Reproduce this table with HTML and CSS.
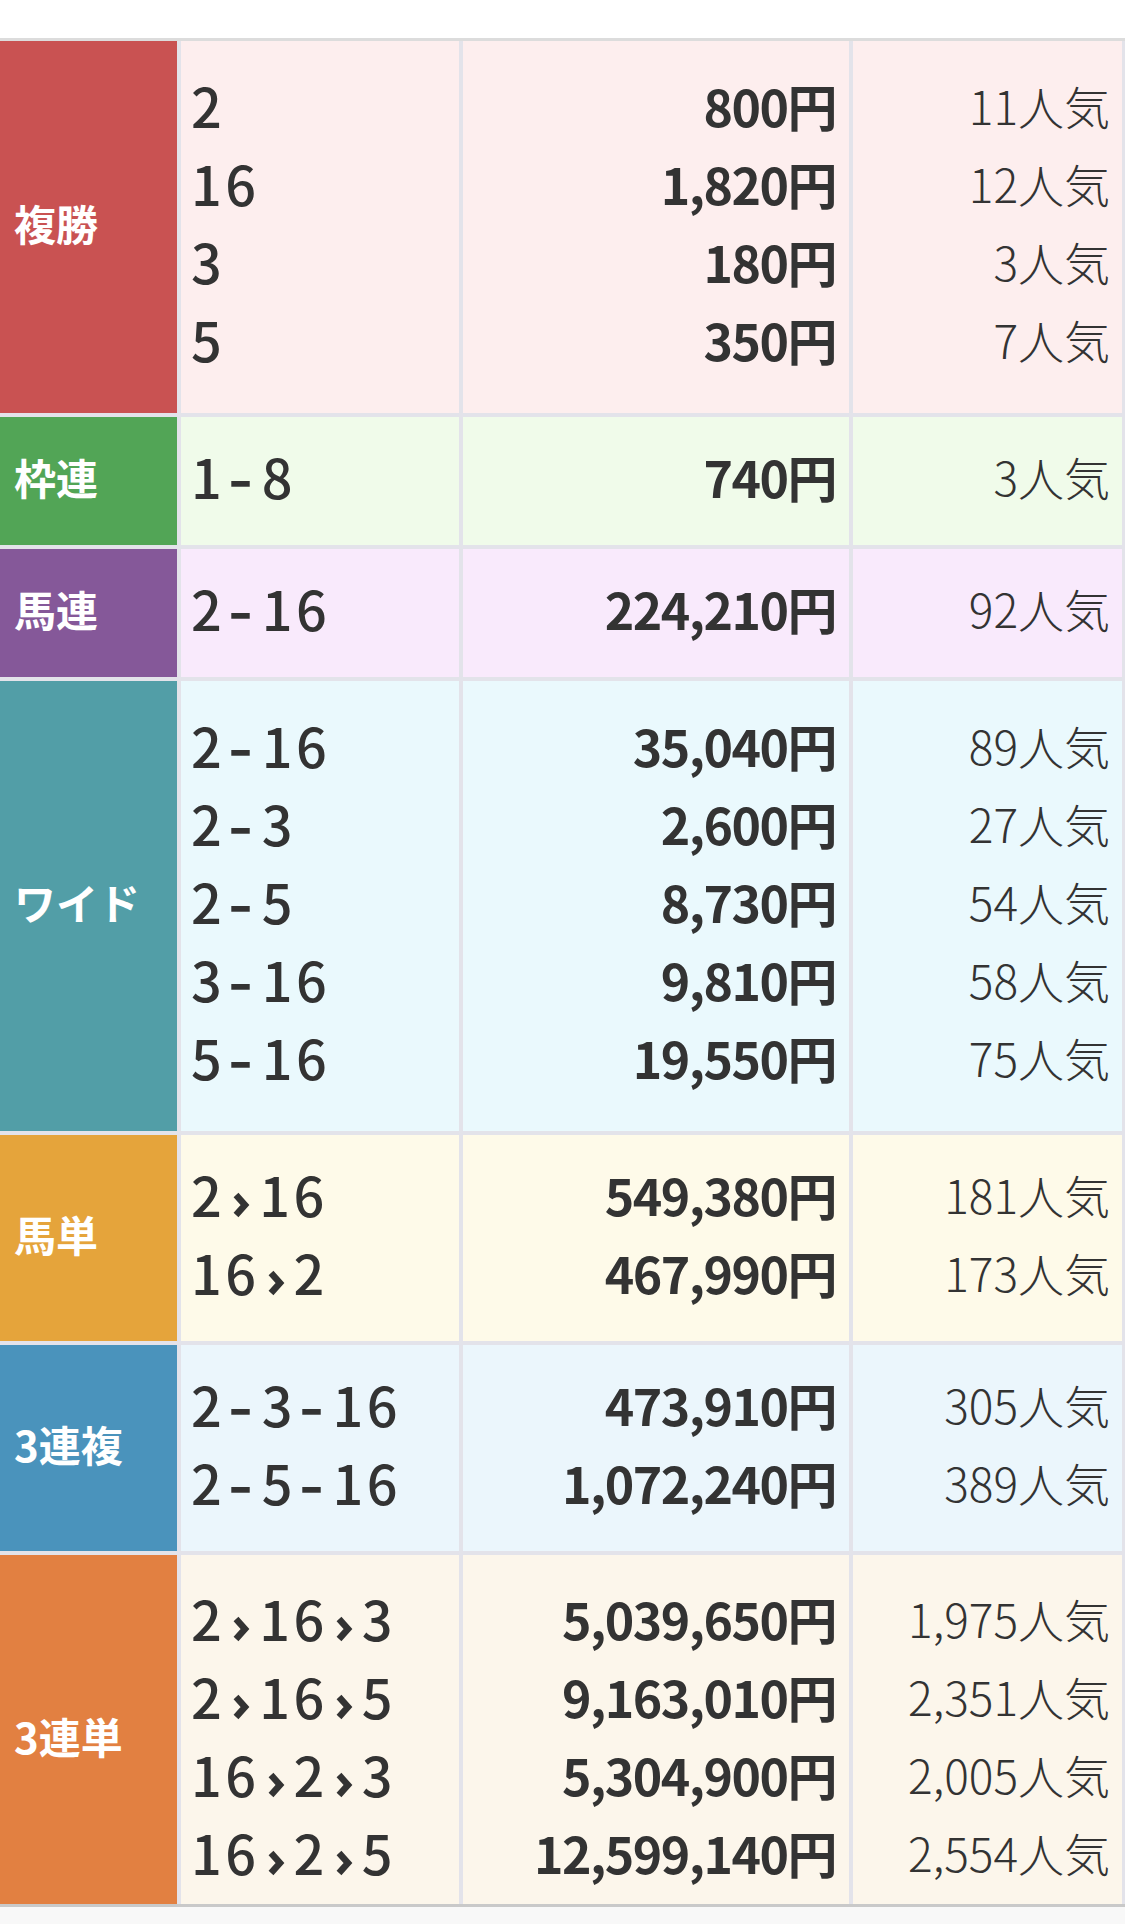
FILE: index.html
```html
<!DOCTYPE html>
<html lang="ja">
<head>
    <meta charset="UTF-8">
    <meta name="viewport" content="width=device-width, initial-scale=1.0">
    <title>払戻金</title>
    <link rel="stylesheet" href="styles.css">
</head>
<body>
    <div class="topbar"></div>

    <div class="payouts">
        <div class="bet fukusho multi">
            <div class="type">複勝</div>
            <div class="cell combo"><p>2</p><p>16</p><p>3</p><p>5</p></div>
            <div class="cell pay"><p>800円</p><p>1,820円</p><p>180円</p><p>350円</p></div>
            <div class="cell pop"><p>11人気</p><p>12人気</p><p>3人気</p><p>7人気</p></div>
        </div>

        <div class="bet wakuren">
            <div class="type">枠連</div>
            <div class="cell combo"><p>1<span class="sep">-</span>8</p></div>
            <div class="cell pay"><p>740円</p></div>
            <div class="cell pop"><p>3人気</p></div>
        </div>

        <div class="bet umaren">
            <div class="type">馬連</div>
            <div class="cell combo"><p>2<span class="sep">-</span>16</p></div>
            <div class="cell pay"><p>224,210円</p></div>
            <div class="cell pop"><p>92人気</p></div>
        </div>

        <div class="bet wide multi">
            <div class="type">ワイド</div>
            <div class="cell combo">
                <p>2<span class="sep">-</span>16</p>
                <p>2<span class="sep">-</span>3</p>
                <p>2<span class="sep">-</span>5</p>
                <p>3<span class="sep">-</span>16</p>
                <p>5<span class="sep">-</span>16</p>
            </div>
            <div class="cell pay"><p>35,040円</p><p>2,600円</p><p>8,730円</p><p>9,810円</p><p>19,550円</p></div>
            <div class="cell pop"><p>89人気</p><p>27人気</p><p>54人気</p><p>58人気</p><p>75人気</p></div>
        </div>

        <div class="bet umatan">
            <div class="type">馬単</div>
            <div class="cell combo">
                <p>2<svg class="arrow" viewBox="0 0 20 28"><path d="M5 4 L14 14 L5 24"/></svg>16</p>
                <p>16<svg class="arrow" viewBox="0 0 20 28"><path d="M5 4 L14 14 L5 24"/></svg>2</p>
            </div>
            <div class="cell pay"><p>549,380円</p><p>467,990円</p></div>
            <div class="cell pop"><p>181人気</p><p>173人気</p></div>
        </div>

        <div class="bet sanrenpuku">
            <div class="type">3連複</div>
            <div class="cell combo">
                <p>2<span class="sep">-</span>3<span class="sep">-</span>16</p>
                <p>2<span class="sep">-</span>5<span class="sep">-</span>16</p>
            </div>
            <div class="cell pay"><p>473,910円</p><p>1,072,240円</p></div>
            <div class="cell pop"><p>305人気</p><p>389人気</p></div>
        </div>

        <div class="bet sanrentan multi last">
            <div class="type">3連単</div>
            <div class="cell combo">
                <p>2<svg class="arrow" viewBox="0 0 20 28"><path d="M5 4 L14 14 L5 24"/></svg>16<svg class="arrow" viewBox="0 0 20 28"><path d="M5 4 L14 14 L5 24"/></svg>3</p>
                <p>2<svg class="arrow" viewBox="0 0 20 28"><path d="M5 4 L14 14 L5 24"/></svg>16<svg class="arrow" viewBox="0 0 20 28"><path d="M5 4 L14 14 L5 24"/></svg>5</p>
                <p>16<svg class="arrow" viewBox="0 0 20 28"><path d="M5 4 L14 14 L5 24"/></svg>2<svg class="arrow" viewBox="0 0 20 28"><path d="M5 4 L14 14 L5 24"/></svg>3</p>
                <p>16<svg class="arrow" viewBox="0 0 20 28"><path d="M5 4 L14 14 L5 24"/></svg>2<svg class="arrow" viewBox="0 0 20 28"><path d="M5 4 L14 14 L5 24"/></svg>5</p>
            </div>
            <div class="cell pay"><p>5,039,650円</p><p>9,163,010円</p><p>5,304,900円</p><p>12,599,140円</p></div>
            <div class="cell pop"><p>1,975人気</p><p>2,351人気</p><p>2,005人気</p><p>2,554人気</p></div>
        </div>
    </div>
</body>
</html>
```

FILE: styles.css
```css
* {
    box-sizing: border-box;
    margin: 0;
    padding: 0;
}

body {
    font-family: "Noto Sans CJK JP", sans-serif;
    background-color: #f8f8f8;
    color: #333;
}

.topbar {
    height: 38px;
    background: #fff;
}

.payouts {
    display: flex;
    flex-direction: column;
    gap: 4px;
    padding-right: 3px;
    background: #e3e3ea;
    border-top: 3px solid #dcdcdc;
    border-bottom: 3px solid #c9c9c9;
}

.bet {
    display: grid;
    grid-template-columns: 177px 278px 386px 1fr;
    column-gap: 4px;
}

.bet > div {
    padding-top: 20px;
    padding-bottom: 30px;
}

.bet.multi > div {
    padding-top: 25px;
    padding-bottom: 35px;
}

.bet.last > div {
    padding-top: 24px;
    padding-bottom: 13px;
}

.type {
    display: flex;
    align-items: center;
    padding-left: 14px;
    color: #fff;
    font-size: 42px;
    font-weight: 700;
}

.cell p {
    height: 78px;
    line-height: 78px;
    white-space: nowrap;
}

.combo {
    padding-left: 10px;
    font-size: 54px;
    font-weight: 500;
    letter-spacing: 3.5px;
}

.sep {
    display: inline-block;
    margin: 0 7px 0 6px;
    font-weight: 700;
    transform: scaleX(1.25);
}

.arrow {
    display: inline-block;
    width: 20px;
    height: 28px;
    margin: 0 8px 0 6px;
    vertical-align: -2px;
    fill: none;
    stroke: #333;
    stroke-width: 6.5;
}

.pay {
    padding-right: 13px;
    text-align: right;
    font-size: 50px;
    font-weight: 700;
    letter-spacing: -1.5px;
}

.pop {
    padding-right: 12px;
    text-align: right;
    font-size: 46px;
    font-weight: 300;
}

/* bet type colours */
.fukusho .type { background: #c95252; }
.fukusho .cell { background: #fdeeee; }

.wakuren .type { background: #52a556; }
.wakuren .cell { background: #f0fbea; }

.umaren .type { background: #855899; }
.umaren .cell { background: #f9eafc; }

.wide .type { background: #529ea7; }
.wide .cell { background: #eaf9fd; }

.umatan .type { background: #e5a43b; }
.umatan .cell { background: #fefae9; }

.sanrenpuku .type { background: #4a93bc; }
.sanrenpuku .cell { background: #ebf6fc; }

.sanrentan .type { background: #e28041; }
.sanrentan .cell { background: #fcf6eb; }
```
